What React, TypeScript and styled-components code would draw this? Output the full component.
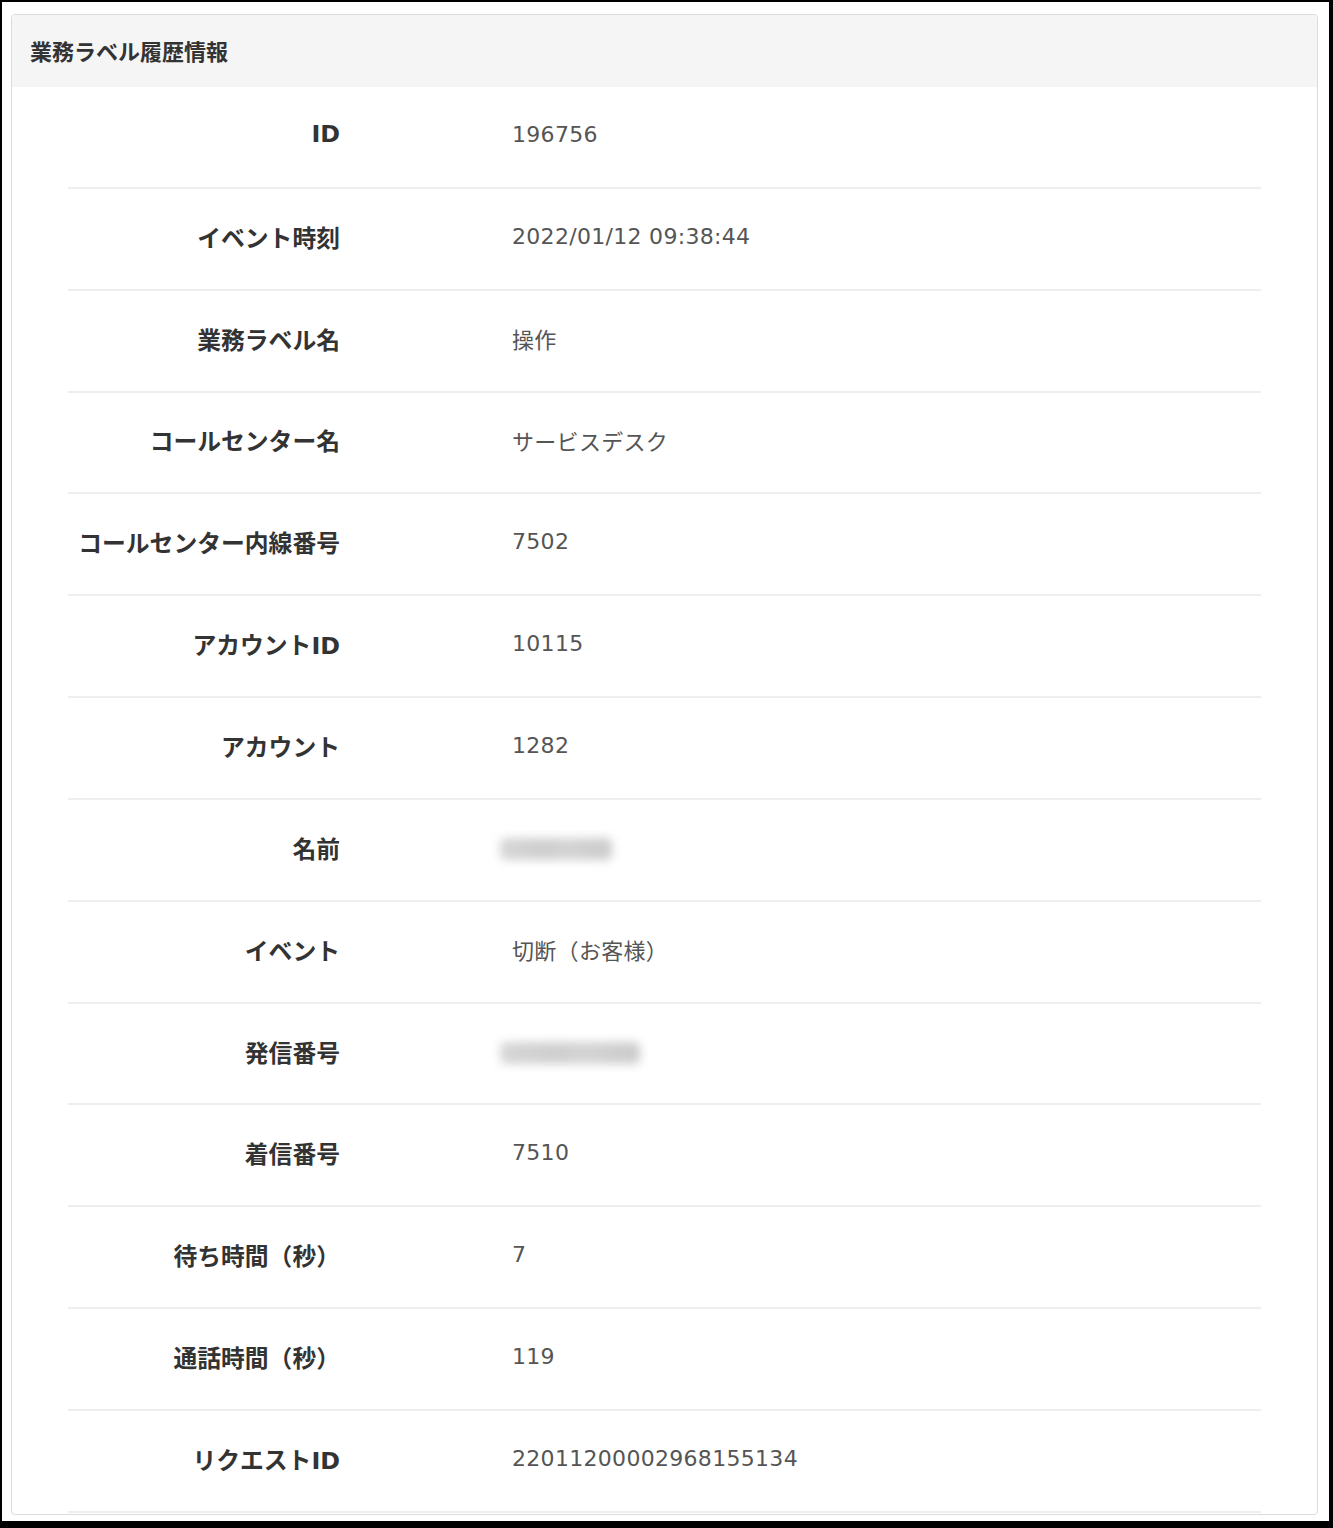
import { FC } from 'react';
import styled, { createGlobalStyle } from 'styled-components';

const GlobalStyle = createGlobalStyle`
  html, body {
    margin: 0;
    padding: 0;
    background: #fff;
  }
  body {
    font-family: 'DejaVu Sans', 'Noto Sans CJK JP', sans-serif;
  }
`;

const Frame = styled.div`
  box-sizing: border-box;
  width: 1333px;
  height: 1528px;
  border-style: solid;
  border-color: #000;
  border-width: 2px 4px 7px 2px;
  padding: 12px 11px 0 9px;
  background: #fff;
`;

const Panel = styled.section`
  border: 1px solid #dcdcdc;
  border-radius: 4px;
  background: #fff;
  overflow: hidden;
  padding-bottom: 1px;
`;

const PanelHeader = styled.header`
  display: flex;
  align-items: center;
  height: 72px;
  padding: 0 18px 2px;
  box-sizing: border-box;
  background: #f5f5f5;
  font-family: 'Noto Sans CJK JP', sans-serif;
  font-size: 22px;
  font-weight: 700;
  color: #333;
`;

const PanelBody = styled.div`
  padding: 0 56px;
`;

const Row = styled.div`
  display: grid;
  grid-template-columns: 272px 1fr;
  column-gap: 172px;
  align-items: center;
  box-sizing: border-box;
  height: 101.85px;
  padding-bottom: 5px;
  border-bottom: 2px solid #eeeeee;
`;

const Label = styled.div`
  text-align: right;
  font-size: 23.8px;
  font-weight: 700;
  color: #333;
  white-space: nowrap;
`;

const Value = styled.div`
  font-size: 22px;
  letter-spacing: 0.3px;
  color: #555;
  white-space: nowrap;
`;

const Blurred = styled.span<{ $width: number }>`
  display: inline-block;
  width: ${({ $width }) => $width}px;
  height: 22px;
  margin-left: -12px;
  vertical-align: middle;
  border-radius: 6px;
  background: linear-gradient(90deg, #cfcfcf, #c6c6c6 40%, #cccccc 60%, #c2c2c2);
  filter: blur(5px);
  opacity: 0.85;
`;

type Item = { label: string; value?: string; blur?: number };

const items: Item[] = [
  { label: 'ID', value: '196756' },
  { label: 'イベント時刻', value: '2022/01/12 09:38:44' },
  { label: '業務ラベル名', value: '操作' },
  { label: 'コールセンター名', value: 'サービスデスク' },
  { label: 'コールセンター内線番号', value: '7502' },
  { label: 'アカウントID', value: '10115' },
  { label: 'アカウント', value: '1282' },
  { label: '名前', blur: 112 },
  { label: 'イベント', value: '切断（お客様）' },
  { label: '発信番号', blur: 140 },
  { label: '着信番号', value: '7510' },
  { label: '待ち時間（秒）', value: '7' },
  { label: '通話時間（秒）', value: '119' },
  { label: 'リクエストID', value: '22011200002968155134' }
];

const App: FC = () => (
  <>
    <GlobalStyle />
    <Frame>
      <Panel>
        <PanelHeader>業務ラベル履歴情報</PanelHeader>
        <PanelBody>
          {items.map((item) => (
            <Row key={item.label}>
              <Label>{item.label}</Label>
              <Value>{item.blur ? <Blurred $width={item.blur} /> : item.value}</Value>
            </Row>
          ))}
        </PanelBody>
      </Panel>
    </Frame>
  </>
);

export default App;
